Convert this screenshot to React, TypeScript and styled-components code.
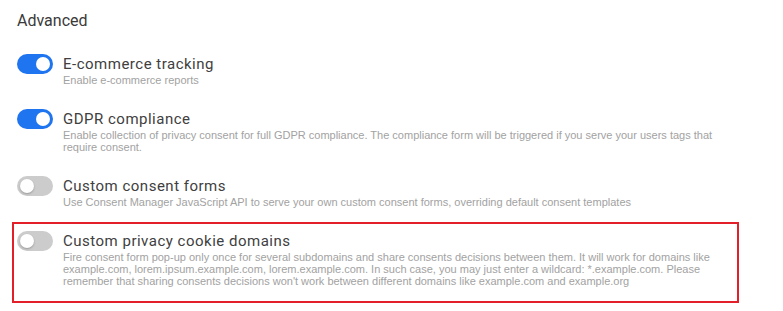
import styled, { createGlobalStyle } from "styled-components";

interface Setting {
  title: string;
  description: string;
  enabled: boolean;
  highlighted?: boolean;
}

const settings: Setting[] = [
  {
    title: "E-commerce tracking",
    description: "Enable e-commerce reports",
    enabled: true,
  },
  {
    title: "GDPR compliance",
    description:
      "Enable collection of privacy consent for full GDPR compliance. The compliance form will be triggered if you serve your users tags that require consent.",
    enabled: true,
  },
  {
    title: "Custom consent forms",
    description:
      "Use Consent Manager JavaScript API to serve your own custom consent forms, overriding default consent templates",
    enabled: false,
  },
  {
    title: "Custom privacy cookie domains",
    description:
      "Fire consent form pop-up only once for several subdomains and share consents decisions between them. It will work for domains like example.com, lorem.ipsum.example.com, lorem.example.com. In such case, you may just enter a wildcard: *.example.com. Please remember that sharing consents decisions won't work between different domains like example.com and example.org",
    enabled: false,
    highlighted: true,
  },
];

export default function App() {
  return (
    <>
      <GlobalStyle />
      <Page>
        <Heading>Advanced</Heading>
        <List>
          {settings.map((s) => (
            <Row key={s.title} $highlighted={!!s.highlighted}>
              <Toggle $on={s.enabled}>
                <Knob $on={s.enabled} />
              </Toggle>
              <TextCol>
                <Title>{s.title}</Title>
                <Description>{s.description}</Description>
              </TextCol>
            </Row>
          ))}
        </List>
      </Page>
    </>
  );
}

const GlobalStyle = createGlobalStyle`
  html, body {
    margin: 0;
    padding: 0;
    background: #ffffff;
  }
`;

const Page = styled.div`
  width: 783px;
  padding: 11px 0 0 12px;
  box-sizing: border-box;
  font-family: Roboto, "Liberation Sans", Arial, sans-serif;
`;

const Heading = styled.div`
  padding-left: 5px;
  font-size: 16px;
  line-height: 20px;
  color: #3a3a3a;
  margin-bottom: 14px;
`;

const List = styled.div`
  display: flex;
  flex-direction: column;
`;

const Row = styled.div<{ $highlighted: boolean }>`
  width: 727px;
  box-sizing: border-box;
  display: flex;
  align-items: flex-start;
  gap: 10px;
  padding: 7px 12px ${(p) => (p.$highlighted ? "14px" : "12px")} 3px;
  border: 2px solid ${(p) => (p.$highlighted ? "#e3202a" : "transparent")};
`;

const Toggle = styled.div<{ $on: boolean }>`
  flex: none;
  position: relative;
  width: 36px;
  height: 20px;
  border-radius: 10px;
  background: ${(p) => (p.$on ? "#1f74ef" : "#cccccc")};
`;

const Knob = styled.div<{ $on: boolean }>`
  position: absolute;
  top: 3px;
  left: ${(p) => (p.$on ? "19px" : "3px")};
  width: 14px;
  height: 14px;
  border-radius: 50%;
  background: #ffffff;
  box-shadow: ${(p) => (p.$on ? "none" : "0 1px 2px rgba(0,0,0,0.25)")};
`;

const TextCol = styled.div`
  flex: 1;
  min-width: 0;
`;

const Title = styled.div`
  font-size: 15px;
  line-height: 20px;
  letter-spacing: 0.5px;
  color: #404040;
`;

const Description = styled.div`
  font-family: "Liberation Sans", Arial, sans-serif;
  font-size: 11px;
  line-height: 12px;
  color: #a2a2a2;
`;
